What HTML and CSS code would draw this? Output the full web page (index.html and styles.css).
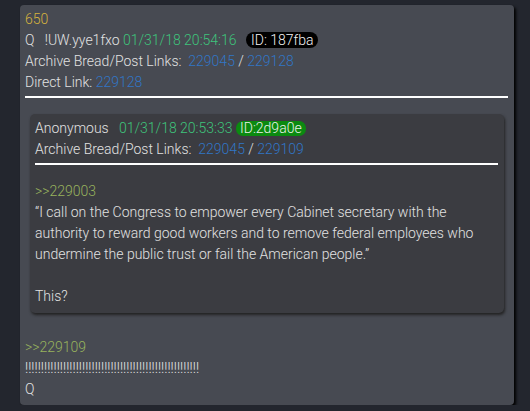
FILE: index.html
```html
<!DOCTYPE html>
<html>
<head>
<meta charset="utf-8">
<link rel="stylesheet" href="styles.css">
</head>
<body>
<div class="post">
  <div class="line num">650</div>
  <div class="line">Q&nbsp;&nbsp; !UW.yye1fxo <span class="date">01/31/18 20:54:16</span> <span class="idb">ID: 187fba</span></div>
  <div class="line">Archive Bread/Post Links:&nbsp; <span class="link">229045</span> / <span class="link">229128</span></div>
  <div class="line">Direct Link: <span class="link">229128</span></div>
  <div class="rule"></div>
  <div class="quote">
    <div class="line">Anonymous&nbsp;&nbsp; <span class="date">01/31/18 20:53:33</span> <span class="idg">ID:2d9a0e</span></div>
    <div class="line">Archive Bread/Post Links:&nbsp; <span class="link">229045</span> / <span class="link">229109</span></div>
    <div class="rule"></div>
    <div class="body">
      <div class="line green">&gt;&gt;229003</div>
      <div class="line">“I call on the Congress to empower every Cabinet secretary with the authority to reward good workers and to remove federal employees who undermine the public trust or fail the American people.”</div>
      <div class="line">&nbsp;</div>
      <div class="line">This?</div>
    </div>
  </div>
  <div class="tail">
    <div class="line green">&gt;&gt;229109</div>
    <div class="line">!!!!!!!!!!!!!!!!!!!!!!!!!!!!!!!!!!!!!!!!!!!!!!!!!!!!!!!</div>
    <div class="line">Q</div>
  </div>
</div>
</body>
</html>
```

FILE: styles.css
```css
html, body {
  margin: 0;
  padding: 0;
  background: #23262e;
}
body {
  font-family: Roboto, "Liberation Sans", sans-serif;
  font-weight: 300;
  font-size: 14px;
  line-height: 21px;
  color: #e2e2e2;
}
.post {
  margin: 5px 0 0 20px;
  width: 494px;
  height: 400px;
  box-sizing: border-box;
  padding: 4px 6px 0 5px;
  background: #474a52;
  border-radius: 4px;
  box-shadow: 2px 2px 3px #000;
}
.num { color: #d6b33e; }
.date { color: #3ec47c; }
.link { color: #3176c6; }
.green { color: #98b35d; }
.idb {
  display: inline-block;
  margin-left: 6px;
  background: #000;
  color: #f2f2f2;
  border-radius: 8px;
  padding: 0 5px;
  line-height: 16px;
}
.idg {
  display: inline-block;
  background: #0b8a10;
  color: #e9f1e9;
  border-radius: 7px;
  padding: 0 4px;
  line-height: 15px;
}
.rule {
  height: 2px;
  background: #ffffff;
  margin-top: 3px;
}
.quote {
  margin: 16px 4px 0 5px;
  padding: 4px 6px 6px 5px;
  background: #3b3c41;
  border-radius: 5px;
  box-shadow: 1px 2px 3px #222;
}
.body {
  margin-top: 16px;
}
.tail {
  margin-top: 24px;
}
```
